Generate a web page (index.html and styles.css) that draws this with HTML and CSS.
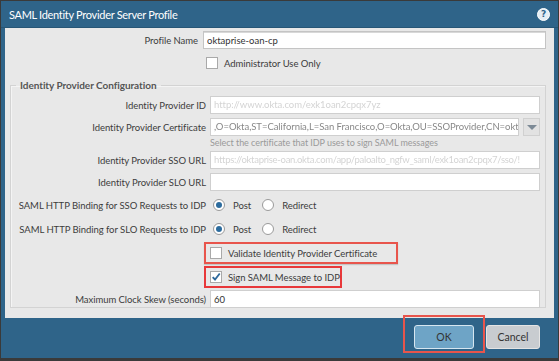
FILE: index.html
```html
<!DOCTYPE html>
<html lang="en">
<head>
    <meta charset="UTF-8">
    <title>SAML Identity Provider Server Profile</title>
    <link rel="stylesheet" href="styles.css">
</head>
<body>
    <div class="dialog">
        <div class="titlebar">
            <span class="title">SAML Identity Provider Server Profile</span>
            <span class="help">?</span>
        </div>

        <div class="content">
            <div class="row top-row">
                <label class="lbl top-lbl">Profile Name</label>
                <div class="field"><input class="text" type="text" value="oktaprise-oan-cp"></div>
            </div>
            <div class="row check-row top-check">
                <span class="lbl top-lbl"></span>
                <span class="box"></span>
                <span class="check-text">Administrator Use Only</span>
            </div>

            <fieldset class="group">
                <legend>Identity Provider Configuration</legend>

                <div class="row">
                    <label class="lbl">Identity Provider ID</label>
                    <div class="field"><div class="text blurred">http://www.okta.com/exk1oan2cpqx7yz</div></div>
                </div>
                <div class="row">
                    <label class="lbl">Identity Provider Certificate</label>
                    <div class="field select">
                        <div class="text cert">,O=Okta,ST=California,L=San Francisco,O=Okta,OU=SSOProvider,CN=okt</div>
                        <span class="drop"></span>
                    </div>
                </div>
                <div class="row hint-row">
                    <span class="lbl"></span>
                    <span class="hint">Select the certificate that IDP uses to sign SAML messages</span>
                </div>
                <div class="row">
                    <label class="lbl">Identity Provider SSO URL</label>
                    <div class="field"><div class="text blurred full">https://oktaprise-oan.okta.com/app/paloalto_ngfw_saml/exk1oan2cpqx7/sso/!</div></div>
                </div>
                <div class="row">
                    <label class="lbl">Identity Provider SLO URL</label>
                    <div class="field"><div class="text"></div></div>
                </div>
                <div class="row radio-row first-radio">
                    <label class="lbl">SAML HTTP Binding for SSO Requests to IDP</label>
                    <span class="radio on"></span><span class="radio-text">Post</span>
                    <span class="radio"></span><span class="radio-text">Redirect</span>
                </div>
                <div class="row radio-row">
                    <label class="lbl">SAML HTTP Binding for SLO Requests to IDP</label>
                    <span class="radio on"></span><span class="radio-text">Post</span>
                    <span class="radio"></span><span class="radio-text">Redirect</span>
                </div>
                <div class="row check-row">
                    <span class="lbl"></span>
                    <div class="mark mark-validate">
                        <span class="box"></span>
                        <span class="check-text">Validate Identity Provider Certificate</span>
                    </div>
                </div>
                <div class="row check-row">
                    <span class="lbl"></span>
                    <div class="mark mark-sign">
                        <span class="box checked">
                            <svg width="12" height="12" viewBox="0 0 12 12"><path d="M2 6.2 L4.8 9 L10.5 1.8" fill="none" stroke="#2f6a9c" stroke-width="2.2"/></svg>
                        </span>
                        <span class="check-text">Sign SAML Message to IDP</span>
                    </div>
                </div>
                <div class="row last-row">
                    <label class="lbl">Maximum Clock Skew (seconds)</label>
                    <div class="field"><input class="text" type="text" value="60"></div>
                </div>
            </fieldset>
        </div>

        <div class="footer">
            <div class="ok-mark"><button class="btn ok">OK</button></div>
            <button class="btn cancel">Cancel</button>
        </div>
    </div>
</body>
</html>
```

FILE: styles.css
```css
* {
    box-sizing: border-box;
}
body {
    margin: 0;
    background-color: #3a3a3a;
    font-family: 'Lato', 'Liberation Sans', sans-serif;
    font-size: 9.5px;
    letter-spacing: -0.05px;
    color: #3c3c3c;
}
.dialog {
    width: 559px;
    height: 361px;
    border: 1px solid #3a3a3a;
    border-bottom-width: 3px;
    background-color: #2f6489;
    display: flex;
    flex-direction: column;
}
.titlebar {
    height: 27px;
    display: flex;
    align-items: center;
    justify-content: space-between;
    padding: 0 8px 0 8px;
    border-bottom: 1px solid #275676;
}
.title {
    font-family: 'Lato', sans-serif;
    font-size: 11px;
    color: #fff;
    letter-spacing: -0.3px;
}
.help {
    width: 13px;
    height: 13px;
    border-radius: 50%;
    background-color: #e4eef5;
    border: 1px solid #fff;
    color: #2f6489;
    font-family: 'DejaVu Sans', sans-serif;
    font-weight: bold;
    font-size: 9px;
    line-height: 11px;
    text-align: center;
}
.content {
    margin: 0 4px;
    height: 290px;
    background-color: #e8e8e8;
    padding: 3px 8px 0 5px;
}
.row {
    display: flex;
    align-items: center;
    margin-bottom: 4px;
}
.lbl {
    flex: 0 0 194px;
    text-align: right;
    padding-right: 4px;
    white-space: nowrap;
}
.top-lbl {
    flex-basis: 193px;
    padding-right: 5px;
}
.field {
    flex: 1;
    min-width: 0;
    display: flex;
}
.text {
    width: 100%;
    min-width: 0;
    height: 18px;
    border: 1px solid #cfcfcf;
    background-color: #fff;
    font-family: inherit;
    font-size: 9.5px;
    color: #333;
    padding: 0 3px;
    line-height: 16px;
    white-space: nowrap;
    overflow: hidden;
}
.top-row .text {
    border-color: #c4c4c4;
    box-shadow: inset 0 1px 0 #d8d8d8;
}
.blurred {
    color: #d4d4d4;
    filter: blur(0.4px);
}
.full {
    letter-spacing: -0.3px;
}
.cert {
    flex: 1;
    color: #888;
    filter: blur(0.4px);
}
.select {
    gap: 4px;
}
.drop {
    flex: 0 0 17px;
    height: 18px;
    border: 1px solid #d0d0d0;
    background-color: #e2e2e2;
    position: relative;
}
.drop::after {
    content: '';
    position: absolute;
    left: 3px;
    top: 6px;
    border-left: 5px solid transparent;
    border-right: 5px solid transparent;
    border-top: 5px solid #7d8a96;
}
.hint-row {
    margin-top: -3px;
    margin-bottom: 3px;
}
.hint {
    color: #9a9a9a;
    font-size: 9px;
}
.check-row {
    height: 20px;
}
.top-check {
    margin-top: 2px;
}
.box {
    width: 12px;
    height: 12px;
    border: 1px solid #a9a9a9;
    background-color: #fff;
    margin: 0 6px 0 3px;
    display: inline-flex;
    align-items: center;
    justify-content: center;
}
.group {
    min-width: 0;
    margin: 6px 0 0 0;
    border: 1px solid #d3d3d3;
    box-shadow: inset 1px 1px 0 #f4f4f4;
    padding: 5px 5px 4px 5px;
    height: 229px;
}
.group legend {
    font-weight: bold;
    color: #555;
    padding: 0 4px;
    font-size: 10px;
}
.radio-row {
    height: 20px;
    margin-bottom: 4px;
}
.first-radio {
    margin-top: 3px;
}
.radio {
    width: 12px;
    height: 12px;
    border-radius: 50%;
    border: 1px solid #9a9a9a;
    background-color: #fff;
    margin: 0 8px 0 3px;
    position: relative;
}
.radio.on::after {
    content: '';
    position: absolute;
    left: 2px;
    top: 2px;
    width: 6px;
    height: 6px;
    border-radius: 50%;
    background-color: #2c6c9e;
}
.radio-text {
    margin-right: 8px;
}
.mark {
    display: flex;
    align-items: center;
    border: 2px solid #e8554c;
    height: 22px;
    padding-right: 19px;
    margin-left: -6px;
}
.mark-validate {
    box-shadow: 0 1px 1px rgba(0, 0, 0, 0.15);
}
.mark .box {
    margin-left: 4px;
}
.mark-sign {
    border-color: #e8383a;
    padding-right: 0;
}
.check-row + .check-row {
    margin-top: 0;
}
.last-row {
    margin-top: -1px;
}
.footer {
    flex: 1;
    display: flex;
    justify-content: flex-end;
    align-items: flex-start;
    gap: 1px;
    padding: 0 18px 0 0;
}
.ok-mark {
    margin-top: -3px;
    border: 2px solid #e8554c;
    padding: 8px 9px 2px;
}
.btn {
    height: 24px;
    border-radius: 3px;
    font-family: 'Lato', sans-serif;
    font-size: 10.5px;
    color: #333;
}
.ok {
    width: 60px;
    background-color: #6ea4c6;
    border: 1px solid #d6e6f0;
}
.cancel {
    margin-top: 7px;
    width: 54px;
    background-color: #c8ccd0;
    border: 1px solid #e4e4e4;
}
```
